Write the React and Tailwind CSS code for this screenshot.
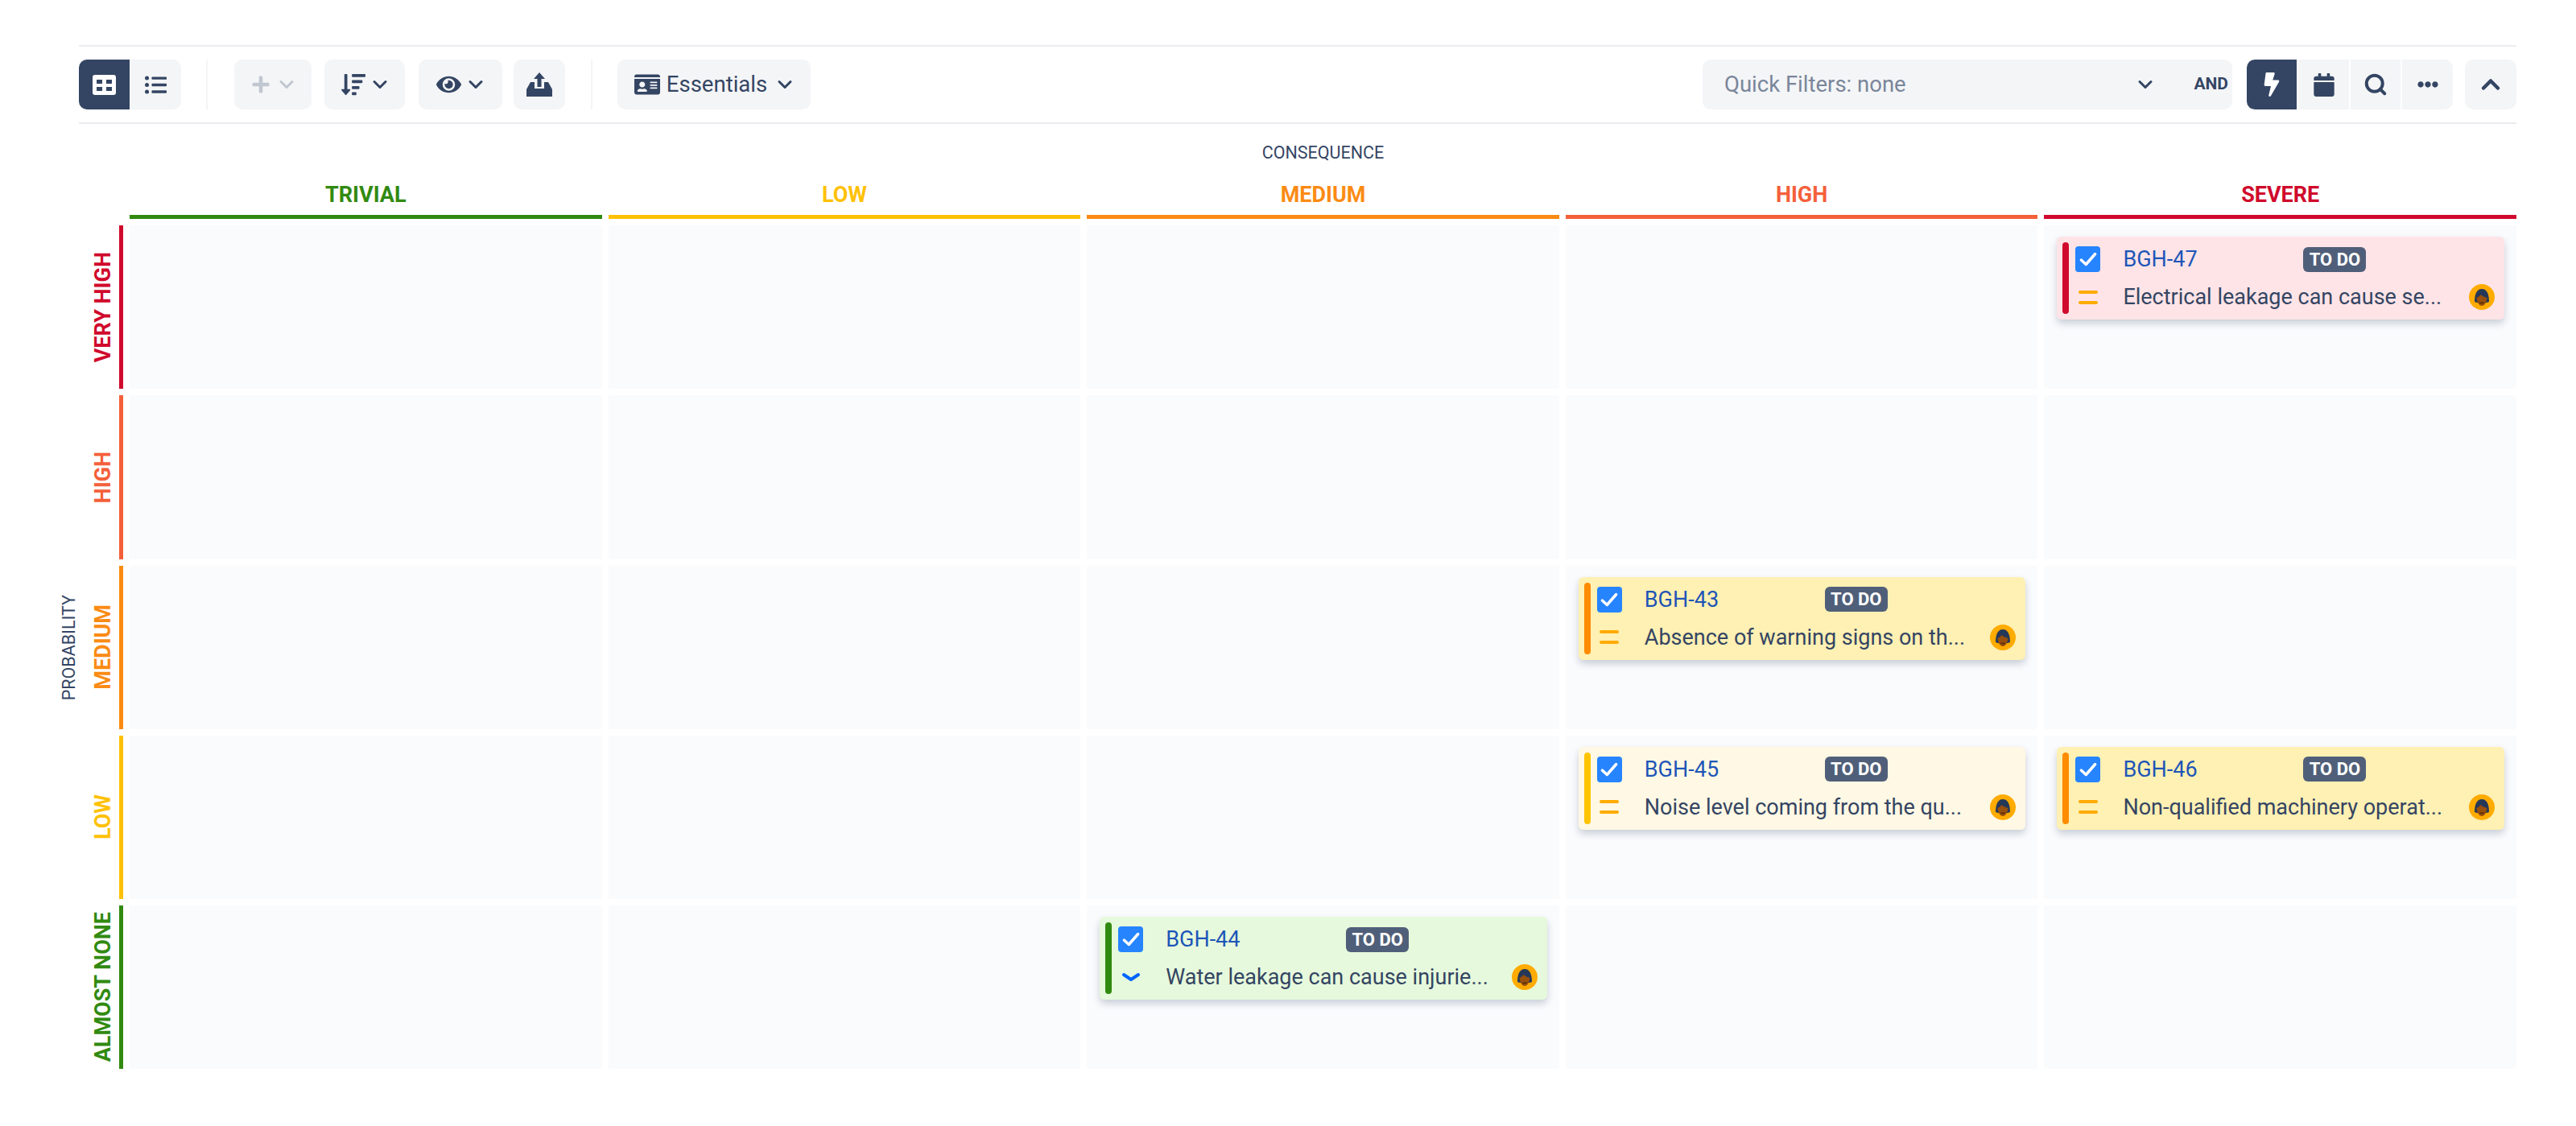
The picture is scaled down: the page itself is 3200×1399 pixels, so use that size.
import { ChevronDown, ChevronUp, Search } from 'lucide-react';
import {
    FaBolt,
    FaCalendar,
    FaEllipsisH,
    FaEye,
    FaIdCard,
    FaListUl,
    FaPlus,
    FaSortAmountDown,
} from 'react-icons/fa';

const COLUMNS = [
    { name: 'TRIVIAL', text: 'text-[#318a10]', bar: 'bg-[#318a10]' },
    { name: 'LOW', text: 'text-[#ffc107]', bar: 'bg-[#ffc107]' },
    { name: 'MEDIUM', text: 'text-[#fb8b14]', bar: 'bg-[#fb8b14]' },
    { name: 'HIGH', text: 'text-[#f4603a]', bar: 'bg-[#f4603a]' },
    { name: 'SEVERE', text: 'text-[#d00a2c]', bar: 'bg-[#d00a2c]' },
];

const ROWS = [
    { name: 'VERY HIGH', text: 'text-[#d00a2c]', bar: 'bg-[#d00a2c]' },
    { name: 'HIGH', text: 'text-[#f4603a]', bar: 'bg-[#f4603a]' },
    { name: 'MEDIUM', text: 'text-[#fb8b14]', bar: 'bg-[#fb8b14]' },
    { name: 'LOW', text: 'text-[#ffc107]', bar: 'bg-[#ffc107]' },
    { name: 'ALMOST NONE', text: 'text-[#318a10]', bar: 'bg-[#318a10]' },
];

// Keyed by "row-column"
const CARDS = {
    '0-4': { id: 'BGH-47', summary: 'Electrical leakage can cause se...', bg: 'bg-[#ffe4e7]', bar: 'bg-[#d00a2c]', priority: 'medium' },
    '2-3': { id: 'BGH-43', summary: 'Absence of warning signs on th...', bg: 'bg-[#fff0b3]', bar: 'bg-[#ff8b00]', priority: 'medium' },
    '3-3': { id: 'BGH-45', summary: 'Noise level coming from the qu...', bg: 'bg-[#fff8e4]', bar: 'bg-[#ffc400]', priority: 'medium' },
    '3-4': { id: 'BGH-46', summary: 'Non-qualified machinery operat...', bg: 'bg-[#fff0b3]', bar: 'bg-[#ff8b00]', priority: 'medium' },
    '4-2': { id: 'BGH-44', summary: 'Water leakage can cause injurie...', bg: 'bg-[#e6f9dc]', bar: 'bg-[#318a10]', priority: 'low' },
};

function TinyChevron({ className = '' }) {
    return <ChevronDown strokeWidth={2.600} className={`w-[28px] h-[28px] ${className}`} />;
}

function ToolButton({ active = false, className = '', children }) {
    const tone = active ? 'bg-[#344563] text-white' : 'bg-[#f4f5f7] text-[#344563]';
    return (
        <div className={`h-[62px] rounded-[10px] flex items-center justify-center ${tone} ${className}`}>
            {children}
        </div>
    );
}

function BoardIcon() {
    return (
        <svg viewBox="0 0 29 25" className="w-[29px] h-[25px]">
            <rect width="29" height="25" rx="3" fill="#fff" />
            <rect x="5" y="6" width="7" height="5" fill="#344563" />
            <rect x="17" y="6" width="7" height="5" fill="#344563" />
            <rect x="5" y="15" width="7" height="5" fill="#344563" />
            <rect x="17" y="15" width="7" height="5" fill="#344563" />
        </svg>
    );
}

function ShareIcon() {
    return (
        <svg viewBox="0 0 32 30" className="w-[32px] h-[30px]" fill="#344563">
            <path d="M16 0l7 8h-4.500v10h-5V8H9z" />
            <path d="M5 12h5v8h12v-8h5l5 9v9H0v-9z" />
        </svg>
    );
}

function PriorityIcon({ level }) {
    if (level === 'low') {
        return (
            <svg viewBox="0 0 24 12" className="w-[24px] h-[12px]">
                <path d="M3 3l9 6 9-6" fill="none" stroke="#0065ff" strokeWidth="4" strokeLinecap="round" strokeLinejoin="round" />
            </svg>
        );
    }
    return (
        <div className="w-[24px] flex flex-col gap-[9px]">
            <div className="h-[4px] rounded-full bg-[#ffab00]" />
            <div className="h-[4px] rounded-full bg-[#ffab00]" />
        </div>
    );
}

function Avatar() {
    return (
        <svg viewBox="0 0 32 32" className="w-[32px] h-[32px] shrink-0">
            <circle cx="16" cy="16" r="16" fill="#ffab00" />
            <path d="M7 22c0-10 3-16 9-16s9 6 9 16l-3 1H10z" fill="#253858" />
            <path d="M9.500 17c3-1 4-3 5-4 2 2 5 3 8 4-.5 5-3 10-6.500 10s-6-5-6.500-10z" fill="#974f0c" />
            <path d="M12.500 22.500h7c-1 2.500-6 2.500-7 0z" fill="#5c2f08" />
        </svg>
    );
}

function Checkbox() {
    return (
        <div className="w-[31px] h-[32px] rounded-[4px] bg-[#2684ff] flex items-center justify-center shrink-0">
            <svg viewBox="0 0 24 24" className="w-[26px] h-[26px]">
                <path d="M4 13l5.500 5L20 6" fill="none" stroke="#fff" strokeWidth="3.200" strokeLinecap="round" strokeLinejoin="round" />
            </svg>
        </div>
    );
}

function IssueCard({ card }) {
    return (
        <div className={`ml-[16px] mr-[15px] mt-[14px] h-[103px] rounded-[6px] p-[7px] pr-[12px] flex shadow-[0_5px_10px_rgba(9,30,66,0.2)] ${card.bg}`}>
            <div className={`w-[8px] rounded-full ${card.bar}`} />
            <div className="ml-[8px] flex-1 min-w-0 pt-[5px] flex flex-col gap-[15px]">
                <div className="flex items-center">
                    <Checkbox />
                    <span className="ml-[28px] w-[224px] text-[27px] leading-[32px] text-[#1d55b8]">{card.id}</span>
                    <span className="w-[78px] h-[31px] rounded-[6px] bg-[#505f79] text-white text-[22px] font-bold leading-[31px] text-center whitespace-nowrap">
                        TO DO
                    </span>
                </div>
                <div className="flex items-center h-[32px]">
                    <div className="w-[31px] flex justify-center shrink-0">
                        <PriorityIcon level={card.priority} />
                    </div>
                    <span className="ml-[28px] flex-1 min-w-0 text-[27px] leading-[32px] text-[#344563] whitespace-nowrap">
                        {card.summary}
                    </span>
                    <Avatar />
                </div>
            </div>
        </div>
    );
}

function Toolbar() {
    return (
        <div className="ml-[24px] border-y-2 border-[#ebecf0] h-[98px] flex items-center">
            <div className="flex w-[127px]">
                <ToolButton active className="w-[63px] rounded-r-none">
                    <BoardIcon />
                </ToolButton>
                <ToolButton className="w-[64px] rounded-l-none">
                    <FaListUl className="w-[27px] h-[27px]" />
                </ToolButton>
            </div>
            <div className="w-[2px] h-[62px] bg-[#f4f5f7] ml-[31px] mr-[33px]" />
            <ToolButton className="w-[96px] gap-[6px] pl-[3px]">
                <FaPlus className="w-[24px] h-[24px] text-[#c1c7d0]" />
                <TinyChevron className="text-[#c1c7d0]" />
            </ToolButton>
            <ToolButton className="w-[100px] gap-[4px] pl-[4px] ml-[16px]">
                <FaSortAmountDown className="w-[30px] h-[30px]" />
                <TinyChevron />
            </ToolButton>
            <ToolButton className="w-[104px] gap-[4px] pl-[3px] ml-[17px]">
                <FaEye className="w-[31px] h-[28px]" />
                <TinyChevron />
            </ToolButton>
            <ToolButton className="w-[64px] ml-[14px]">
                <ShareIcon />
            </ToolButton>
            <div className="w-[2px] h-[62px] bg-[#f4f5f7] ml-[32px] mr-[31px]" />
            <ToolButton className="w-[240px] gap-[8px] pl-[3px] text-[27.500px]">
                <FaIdCard className="w-[32px] h-[30px]" />
                <span>Essentials</span>
                <TinyChevron />
            </ToolButton>

            <div className="ml-auto w-[658px] h-[62px] rounded-[10px] bg-[#f4f5f7] flex items-center pl-[27px]">
                <span className="text-[27.500px] text-[#7a869a]">Quick Filters: none</span>
                <TinyChevron className="ml-auto text-[#344563]" />
                <span className="ml-[46px] mr-[5px] text-[21px] font-bold text-[#344563]">AND</span>
            </div>
            <div className="flex ml-[18px] gap-[2px]">
                <ToolButton active className="w-[62px] rounded-r-none">
                    <FaBolt className="w-[24px] h-[30px]" />
                </ToolButton>
                <ToolButton className="w-[63px] rounded-none">
                    <FaCalendar className="w-[26px] h-[29px]" />
                </ToolButton>
                <ToolButton className="w-[62px] rounded-none">
                    <Search strokeWidth={3.200} className="w-[30px] h-[30px]" />
                </ToolButton>
                <ToolButton className="w-[63px] rounded-l-none">
                    <FaEllipsisH className="w-[26px] h-[26px]" />
                </ToolButton>
            </div>
            <ToolButton className="w-[64px] ml-[15px]">
                <ChevronUp strokeWidth={3} className="w-[36px] h-[36px]" />
            </ToolButton>
        </div>
    );
}

export default function App() {
    return (
        <div className="min-h-[1399px] bg-white pt-[56px] px-[74px] font-[Roboto,sans-serif]">
            <Toolbar />

            <div className="flex">
                {/* Probability axis title */}
                <div className="w-[24px] shrink-0 flex items-center justify-center pt-[127px]">
                    <span className="[writing-mode:vertical-rl] rotate-180 text-[21.500px] leading-[24px] text-[#344563] whitespace-nowrap">
                        PROBABILITY
                    </span>
                </div>

                <div className="flex-1 min-w-0 grid grid-cols-[55px_repeat(5,minmax(0,1fr))] gap-x-[8px] gap-y-[8px]">
                    <div className="col-start-2 col-span-5 text-center text-[21.500px] leading-[24px] pt-[24px] h-[54px] -mb-[8px] text-[#344563]">
                        CONSEQUENCE
                    </div>

                    {/* Column headers */}
                    <div />
                    {COLUMNS.map(col => (
                        <div key={col.name} className="flex flex-col items-center">
                            <span className={`text-[27px] leading-[32px] font-bold mt-[18px] ${col.text}`}>{col.name}</span>
                            <div className={`w-full h-[5px] mt-[9px] ${col.bar}`} />
                        </div>
                    ))}

                    {/* Rows */}
                    {ROWS.map((row, r) => (
                        <div key={row.name} className="contents">
                            <div className="h-[203.250px] flex">
                                <div className="flex-1 flex items-center justify-center pl-[9px]">
                                    <span className={`[writing-mode:vertical-rl] rotate-180 text-[27px] leading-[32px] font-bold whitespace-nowrap ${row.text}`}>
                                        {row.name}
                                    </span>
                                </div>
                                <div className={`w-[5px] ${row.bar}`} />
                            </div>
                            {COLUMNS.map((col, c) => {
                                const card = CARDS[`${r}-${c}`];
                                return (
                                    <div key={col.name} className="bg-[#fafbfd] h-[203.250px] overflow-visible">
                                        {card && <IssueCard card={card} />}
                                    </div>
                                );
                            })}
                        </div>
                    ))}
                </div>
            </div>
        </div>
    );
}
